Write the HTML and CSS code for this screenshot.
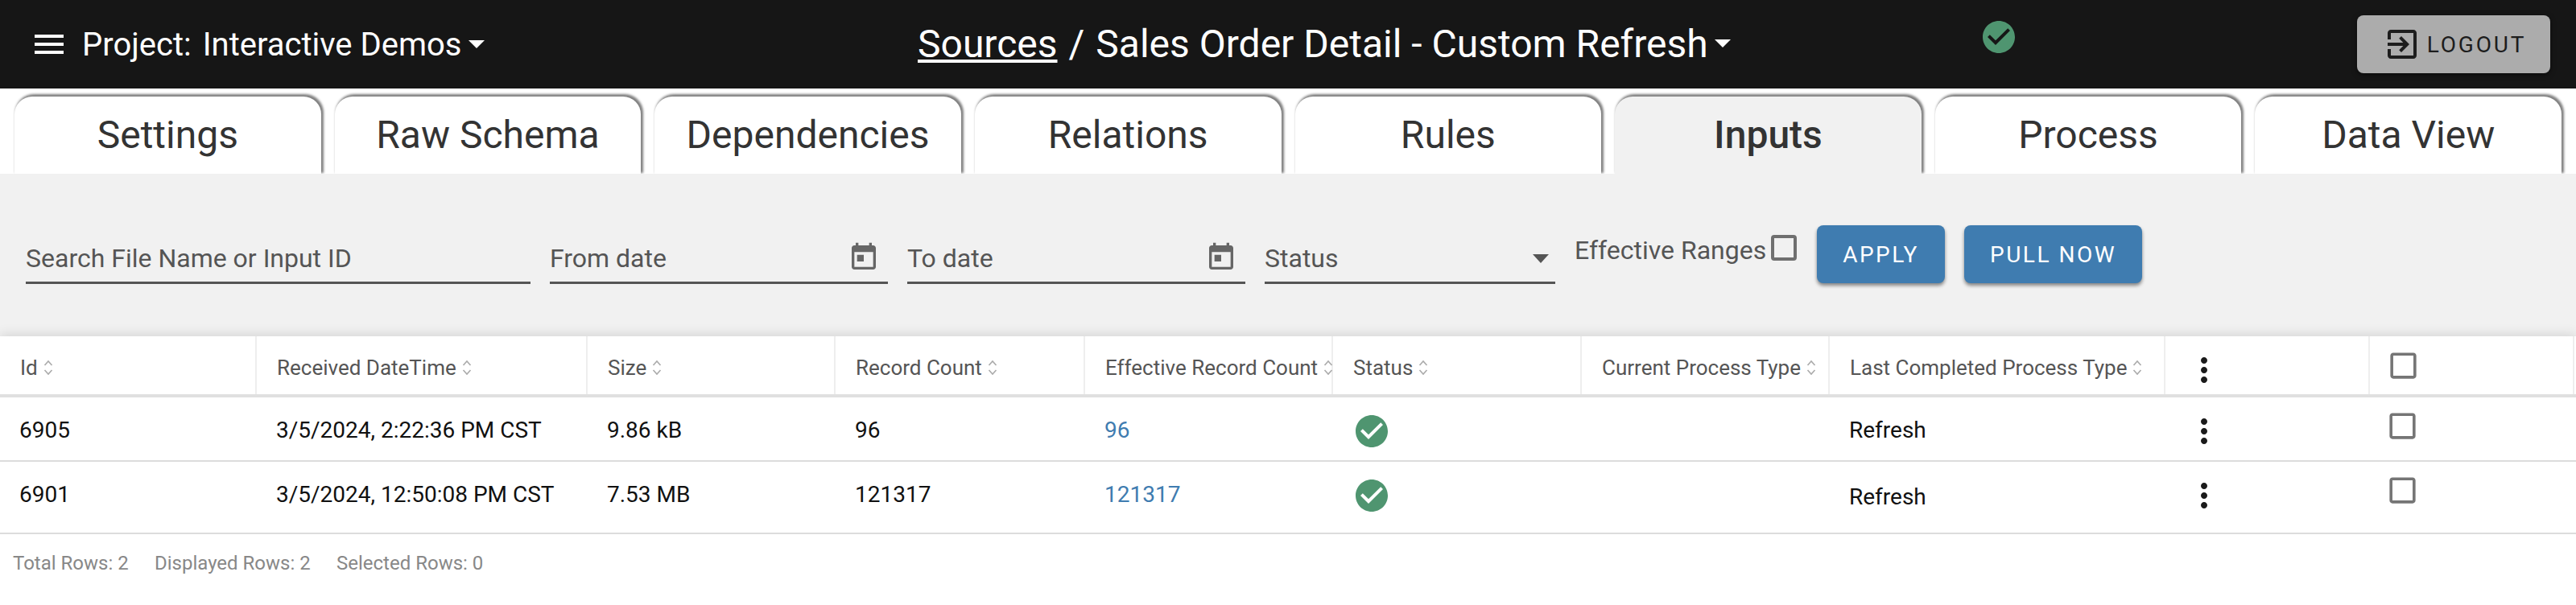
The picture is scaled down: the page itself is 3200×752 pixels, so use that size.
FILE: index.html
```html
<!DOCTYPE html>
<html lang="en">
<head>
<meta charset="utf-8">
<title>Sales Order Detail - Custom Refresh</title>
<link rel="stylesheet" href="styles.css">
</head>
<body>
<svg class="sprite" aria-hidden="true">
  <symbol id="i-check" viewBox="0 0 24 24"><path fill-rule="evenodd" d="M12 2C6.48 2 2 6.48 2 12s4.48 10 10 10 10-4.48 10-10S17.52 2 12 2zm-2 15l-5-5 1.41-1.41L10 14.17l7.59-7.59L19 8l-9 9z"/></symbol>
  <symbol id="i-today" viewBox="0 0 24 24"><path d="M19 3h-1V1h-2v2H8V1H6v2H5c-1.11 0-1.99.9-1.99 2L3 19c0 1.1.89 2 2 2h14c1.1 0 2-.9 2-2V5c0-1.1-.9-2-2-2zm0 16H5V8h14v11zM7 10h5v5H7z"/></symbol>
  <symbol id="i-more" viewBox="0 0 24 24"><path d="M12 8c1.1 0 2-.9 2-2s-.9-2-2-2-2 .9-2 2 .9 2 2 2zm0 2c-1.1 0-2 .9-2 2s.9 2 2 2 2-.9 2-2-.9-2-2-2zm0 6c-1.1 0-2 .9-2 2s.9 2 2 2 2-.9 2-2-.9-2-2-2z"/></symbol>
  <symbol id="i-box" viewBox="0 0 24 24"><path d="M19 5v14H5V5h14m0-2H5c-1.1 0-2 .9-2 2v14c0 1.1.9 2 2 2h14c1.1 0 2-.9 2-2V5c0-1.1-.9-2-2-2z"/></symbol>
  <symbol id="i-sort" viewBox="0 0 12 20"><path d="M1.5 7 6 2l4.500 5M1.500 13 6 18l4.500-5" fill="none" stroke="currentColor" stroke-width="1.600"/></symbol>
</svg>

<header class="topbar">
  <div class="project">
    <svg class="menu-icon" viewBox="0 0 36 24"><path d="M0 0h36v4H0zM0 10h36v4H0zM0 20h36v4H0z"/></svg>
    <span class="project-label">Project:</span>
    <span>Interactive Demos</span>
    <span class="caret"></span>
  </div>
  <div class="crumbs">
    <a class="crumb-link" href="#">Sources</a>
    <span class="crumb-sep">/</span>
    <span>Sales Order Detail - Custom Refresh</span>
    <span class="caret"></span>
  </div>
  <svg class="status-top"><use href="#i-check"/></svg>
  <button class="logout" type="button">
    <svg class="logout-icon" viewBox="0 0 24 24"><path d="M10.090 15.590 11.500 17l5-5-5-5-1.410 1.410L12.670 11H3v2h9.670l-2.580 2.590zM19 3H5c-1.110 0-2 .9-2 2v4h2V5h14v14H5v-4H3v4c0 1.100.89 2 2 2h14c1.100 0 2-.9 2-2V5c0-1.100-.9-2-2-2z"/></svg>
    LOGOUT
  </button>
</header>

<nav class="tabs">
  <a class="tab">Settings</a>
  <a class="tab">Raw Schema</a>
  <a class="tab">Dependencies</a>
  <a class="tab">Relations</a>
  <a class="tab">Rules</a>
  <a class="tab tab-active">Inputs</a>
  <a class="tab">Process</a>
  <a class="tab">Data View</a>
</nav>

<section class="filters">
  <div class="field field-search"><span>Search File Name or Input ID</span></div>
  <div class="field field-date"><span>From date</span><svg class="field-icon"><use href="#i-today"/></svg></div>
  <div class="field field-date"><span>To date</span><svg class="field-icon"><use href="#i-today"/></svg></div>
  <div class="field field-status"><span>Status</span><span class="select-arrow"></span></div>
  <div class="effective">
    <span>Effective Ranges</span>
    <span class="filter-check"></span>
  </div>
  <button class="primary btn-apply" type="button">APPLY</button>
  <button class="primary btn-pull" type="button">PULL NOW</button>
</section>

<section class="grid">
  <div class="row row-head">
    <div class="cell">Id<svg class="sort"><use href="#i-sort"/></svg></div>
    <div class="cell">Received DateTime<svg class="sort"><use href="#i-sort"/></svg></div>
    <div class="cell">Size<svg class="sort"><use href="#i-sort"/></svg></div>
    <div class="cell">Record Count<svg class="sort"><use href="#i-sort"/></svg></div>
    <div class="cell">Effective Record Count<svg class="sort"><use href="#i-sort"/></svg></div>
    <div class="cell">Status<svg class="sort"><use href="#i-sort"/></svg></div>
    <div class="cell">Current Process Type<svg class="sort"><use href="#i-sort"/></svg></div>
    <div class="cell">Last Completed Process Type<svg class="sort"><use href="#i-sort"/></svg></div>
    <div class="cell"><svg class="more"><use href="#i-more"/></svg></div>
    <div class="cell"><svg class="check"><use href="#i-box"/></svg></div>
  </div>
  <div class="row row-one">
    <div class="cell">6905</div>
    <div class="cell">3/5/2024, 2:22:36 PM CST</div>
    <div class="cell">9.86 kB</div>
    <div class="cell">96</div>
    <div class="cell"><a class="link" href="#">96</a></div>
    <div class="cell"><svg class="ok"><use href="#i-check"/></svg></div>
    <div class="cell"></div>
    <div class="cell">Refresh</div>
    <div class="cell"><svg class="more"><use href="#i-more"/></svg></div>
    <div class="cell"><svg class="check"><use href="#i-box"/></svg></div>
  </div>
  <div class="row row-two">
    <div class="cell">6901</div>
    <div class="cell">3/5/2024, 12:50:08 PM CST</div>
    <div class="cell">7.53 MB</div>
    <div class="cell">121317</div>
    <div class="cell"><a class="link" href="#">121317</a></div>
    <div class="cell"><svg class="ok"><use href="#i-check"/></svg></div>
    <div class="cell"></div>
    <div class="cell cell-low">Refresh</div>
    <div class="cell"><svg class="more"><use href="#i-more"/></svg></div>
    <div class="cell"><svg class="check"><use href="#i-box"/></svg></div>
  </div>
  <footer class="totals">
    <span class="total-a">Total Rows: 2</span>
    <span class="total-b">Displayed Rows: 2</span>
    <span>Selected Rows: 0</span>
  </footer>
</section>
</body>
</html>
```
FILE: styles.css
```css
* { box-sizing: border-box; }
html, body { margin: 0; padding: 0; }
body {
  width: 3200px;
  height: 752px;
  overflow: hidden;
  background: #fff;
  font-family: Roboto, "Liberation Sans", sans-serif;
  color: #111;
}
.sprite { display: none; }

.topbar {
  height: 110px;
  background: #161616;
  color: #fff;
  display: grid;
  grid-template-columns: 1140px 1319px 48px 1fr;
  align-items: center;
  font-size: 40px;
}
.project {
  display: flex;
  align-items: center;
  padding-left: 43px;
  white-space: nowrap;
}
.menu-icon { width: 36px; height: 24px; fill: #fff; margin-right: 23px; }
.project-label { margin-right: 14px; }
.caret {
  display: inline-block;
  width: 0;
  height: 0;
  margin-left: 8px;
  border-left: 10px solid transparent;
  border-right: 10px solid transparent;
  border-top: 10px solid #fff;
}
.crumbs {
  display: flex;
  align-items: center;
  font-size: 48px;
  white-space: nowrap;
  padding-bottom: 2px;
}
.crumb-link { color: #fff; }
.crumb-sep { margin: 0 14px; }
.status-top {
  width: 48px;
  height: 48px;
  fill: #4f9570;
  margin-bottom: 18px;
}
.logout {
  justify-self: end;
  width: 240px;
  height: 72px;
  margin-right: 32px;
  border: 0;
  border-radius: 8px;
  background: #acacac;
  color: #1d1d1d;
  font: 400 28px Roboto, sans-serif;
  letter-spacing: 2.8px;
  display: flex;
  align-items: center;
  justify-content: center;
  padding: 0 0 0 2px;
  box-shadow: 0 2px 6px rgba(0,0,0,.5);
}
.logout-icon { width: 48px; height: 48px; fill: #1d1d1d; margin-right: 7px; }

.tabs {
  height: 106px;
  padding: 10px 18px 0;
  display: grid;
  grid-template-columns: repeat(8, 1fr);
  column-gap: 17px;
  background: #fff;
}
.tab {
  display: flex;
  justify-content: center;
  padding-top: 20px;
  font-size: 48px;
  line-height: 56px;
  color: #333;
  background: #fff;
  border-radius: 22px 22px 0 0;
  box-shadow: 2px -2px 3px 1px rgba(0,0,0,.5);
}
.tab-active {
  background: #f1f1f1;
  font-weight: 500;
}

.filters {
  position: relative;
  height: 202px;
  background: #f1f1f1;
  display: flex;
  align-items: flex-start;
  padding: 64px 0 0 32px;
  font-size: 32px;
  color: #555;
}
.field {
  height: 73px;
  border-bottom: 3px solid #555;
  display: flex;
  justify-content: space-between;
  padding-top: 22px;
  margin-right: 24px;
  line-height: 38px;
}
.field-search { width: 627px; }
.field-date { width: 420px; }
.field-status { width: 361px; }
.field-icon { width: 40px; height: 40px; fill: #666; margin: -2px 10px 0 0; }
.select-arrow {
  width: 0;
  height: 0;
  margin: 14px 8px 0 0;
  border-left: 10px solid transparent;
  border-right: 10px solid transparent;
  border-top: 11px solid #555;
}
.effective {
  display: flex;
  align-items: flex-start;
  height: 40px;
  line-height: 38px;
  width: 301px;
  padding-top: 12px;
}
.filter-check {
  width: 32px;
  height: 32px;
  margin-left: 6px;
  border: 4px solid #6f6f6f;
  border-radius: 4px;
}
.primary {
  height: 72px;
  margin-right: 24px;
  border: 0;
  border-radius: 8px;
  background: #3f7cb0;
  color: #fff;
  font: 400 28px Roboto, sans-serif;
  letter-spacing: 2.5px;
  padding: 0;
  box-shadow: 0 3px 4px rgba(0,0,0,.45);
}
.btn-apply { width: 159px; }
.btn-pull { width: 221px; }

.grid {
  position: relative;
  background: #fff;
  height: 334px;
  box-shadow: 0 -2px 14px rgba(0,0,0,.12);
}
.row {
  display: grid;
  grid-template-columns: 319px 411px 308px 310px 308px 309px 308px 417px 254px 254px;
}
.row-head {
  height: 76px;
  border-bottom: 4px solid #e0e0e0;
  font-size: 26px;
  color: #555;
}
.row-head .cell {
  height: 72px;
  display: flex;
  align-items: center;
  padding: 6px 0 0 25px;
  border-right: 2px solid #eee;
  white-space: nowrap;
}
.sort { width: 12px; height: 20px; margin-left: 7px; color: #aaa; flex: none; }
.more { width: 48px; height: 48px; fill: #1a1a1a; display: block; }
.check { width: 43px; height: 43px; fill: #757575; display: block; margin-left: -5px; }
.row-head .more { margin-top: 6px; margin-left: -1px; }
.row-head .check { margin-top: -6px; }

.row-one {
  height: 80px;
  border-bottom: 2px solid #dcdcdc;
  font-size: 28px;
}
.row-two {
  height: 90px;
  border-bottom: 2px solid #dcdcdc;
  font-size: 28px;
}
.row-one .cell, .row-two .cell {
  padding: 22px 0 0 24px;
  line-height: 38px;
  white-space: nowrap;
}
.row-one .cell:nth-child(6), .row-two .cell:nth-child(6),
.row-one .cell:nth-child(9), .row-two .cell:nth-child(9) { padding-top: 18px; }
.row-one .cell:nth-child(10), .row-two .cell:nth-child(10) { padding-top: 14px; }
.row-two .cell-low { padding-top: 25px; }
.link { color: #3f7cb0; text-decoration: none; }
.ok { width: 48px; height: 48px; fill: #4f9570; display: block; }

.totals {
  display: flex;
  padding: 22px 0 0 16px;
  font-size: 24px;
  line-height: 28px;
  color: #888;
}
.total-a { width: 176px; }
.total-b { width: 226px; }
```
